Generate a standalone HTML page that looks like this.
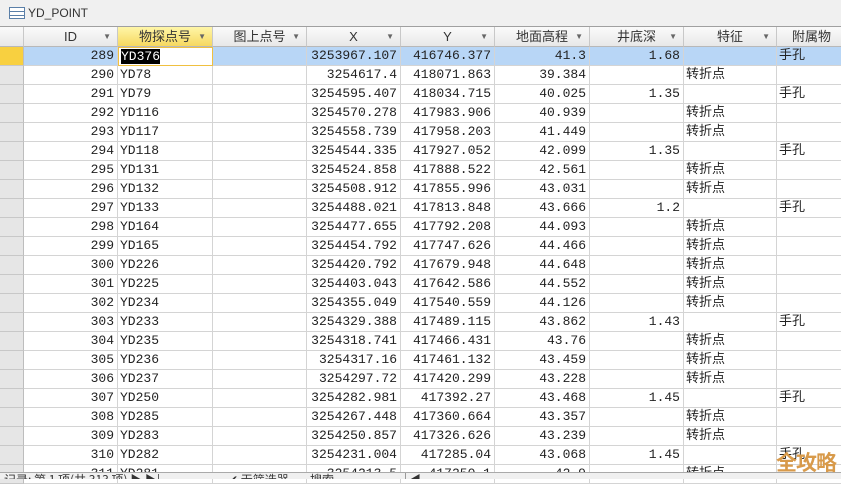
<!DOCTYPE html>
<html><head><meta charset="utf-8"><style>
*{margin:0;padding:0;box-sizing:border-box}
body{width:841px;height:479px;overflow:hidden;background:#fff;font-family:"Liberation Mono","Noto Sans CJK SC",monospace;font-size:13px;color:#222;position:relative}
.title{position:absolute;left:0;top:0;width:841px;height:27px;background:#f0f0f0;border-bottom:1px solid #a0a0a0;font-family:"Liberation Sans",sans-serif;font-size:12px;color:#333}
.title span{position:absolute;left:28px;top:6px}
.ic{position:absolute;left:9px;top:7px;width:16px;height:12px;border:1px solid #5a7fa8;background:repeating-linear-gradient(#fff 0 3px,#5a7fa8 3px 4px)}
.hd{position:absolute;top:27px;height:20px;background:linear-gradient(#fafafa,#e8e8e8);border-right:1px solid #c8c8c8;border-bottom:1px solid #b8b8b8;font-family:"Liberation Sans","Noto Sans CJK SC",sans-serif;font-size:13px;text-align:center;line-height:19px;color:#333}
.hd.sel{background:linear-gradient(#fff6a8,#f6d860)}
.hd i{position:absolute;right:6px;top:0;font-style:normal;font-size:8px;color:#666}
.c{position:absolute;height:19px;line-height:18px;border-right:1px solid #d4d4d4;border-bottom:1px solid #d4d4d4;white-space:nowrap;overflow:hidden}
.r{text-align:right;padding-right:3px}
.l{padding-left:2px}
.rs{position:absolute;left:0;width:24px;height:19px;background:#e6e6e6;border-right:1px solid #bdbdbd;border-bottom:1px solid #c8c8c8}
.status{position:absolute;left:0;top:472px;width:841px;height:7px;background:#f0f0f0;border-top:1px solid #aaa;overflow:hidden;font-family:"Noto Sans CJK SC",sans-serif;font-size:12px;line-height:14px;color:#333}
.status span{position:absolute;top:0}
.wm{position:absolute;left:776px;top:447px;font-family:"Noto Sans CJK SC",sans-serif;font-weight:bold;font-size:21px;color:#d89a4a;letter-spacing:-1px}
</style></head><body>
<div class="title"><div class="ic"></div><span>YD_POINT</span></div>
<div class="hd" style="left:0;width:24px"></div>
<div class="hd" style="left:24px;width:94px">ID<i>▼</i></div>
<div class="hd sel" style="left:118px;width:95px">物探点号<i>▼</i></div>
<div class="hd" style="left:213px;width:94px">图上点号<i>▼</i></div>
<div class="hd" style="left:307px;width:94px">X<i>▼</i></div>
<div class="hd" style="left:401px;width:94px">Y<i>▼</i></div>
<div class="hd" style="left:495px;width:95px">地面高程<i>▼</i></div>
<div class="hd" style="left:590px;width:94px">井底深<i>▼</i></div>
<div class="hd" style="left:684px;width:93px">特征<i>▼</i></div>
<div class="hd" style="left:777px;width:70px">附属物</div>
<div id="g"></div>
<script>
var d=[
[289,"YD376","3253967.107","416746.377","41.3","1.68","","手孔"],
[290,"YD78","3254617.4","418071.863","39.384","","转折点",""],
[291,"YD79","3254595.407","418034.715","40.025","1.35","","手孔"],
[292,"YD116","3254570.278","417983.906","40.939","","转折点",""],
[293,"YD117","3254558.739","417958.203","41.449","","转折点",""],
[294,"YD118","3254544.335","417927.052","42.099","1.35","","手孔"],
[295,"YD131","3254524.858","417888.522","42.561","","转折点",""],
[296,"YD132","3254508.912","417855.996","43.031","","转折点",""],
[297,"YD133","3254488.021","417813.848","43.666","1.2","","手孔"],
[298,"YD164","3254477.655","417792.208","44.093","","转折点",""],
[299,"YD165","3254454.792","417747.626","44.466","","转折点",""],
[300,"YD226","3254420.792","417679.948","44.648","","转折点",""],
[301,"YD225","3254403.043","417642.586","44.552","","转折点",""],
[302,"YD234","3254355.049","417540.559","44.126","","转折点",""],
[303,"YD233","3254329.388","417489.115","43.862","1.43","","手孔"],
[304,"YD235","3254318.741","417466.431","43.76","","转折点",""],
[305,"YD236","3254317.16","417461.132","43.459","","转折点",""],
[306,"YD237","3254297.72","417420.299","43.228","","转折点",""],
[307,"YD250","3254282.981","417392.27","43.468","1.45","","手孔"],
[308,"YD285","3254267.448","417360.664","43.357","","转折点",""],
[309,"YD283","3254250.857","417326.626","43.239","","转折点",""],
[310,"YD282","3254231.004","417285.04","43.068","1.45","","手孔"],
[311,"YD281","3254213.5","417250.1","42.9","","转折点",""]];
var cols=[[24,94,"r"],[118,95,"l"],[213,94,"l"],[307,94,"r"],[401,94,"r"],[495,95,"r"],[590,94,"r"],[684,93,"l"],[777,70,"l"]];
var h="";
d.forEach(function(r,i){var y=47+i*19;var bg=i==0?"#b8d6f6":"#fff";
h+='<div class="rs" style="top:'+y+'px;'+(i==0?'background:#f8d040':'')+'"></div>';
var v=[r[0],r[1],"",r[2],r[3],r[4],r[5],r[6],r[7]];
cols.forEach(function(c,j){var st='left:'+c[0]+'px;width:'+c[1]+'px;top:'+y+'px;background:'+bg+';';
var t=v[j];
if(i==0&&j==1){st+='background:#fff;border:1px solid #f0c040;';t='<span style="background:#000;color:#fff">YD376</span>';}
h+='<div class="c '+c[2]+'" style="'+st+'">'+t+'</div>';});});
document.getElementById("g").innerHTML=h;
</script>
<div class="status"><span style="left:4px">记录: 第 1 项(共 313 项) ▶ ▶|</span><span style="left:228px">✔ 无筛选器</span><span style="left:310px">搜索</span><span style="left:405px;border-left:1px solid #999;padding-left:3px">◀</span></div>
<div class="wm">全攻略</div>
</body></html>
